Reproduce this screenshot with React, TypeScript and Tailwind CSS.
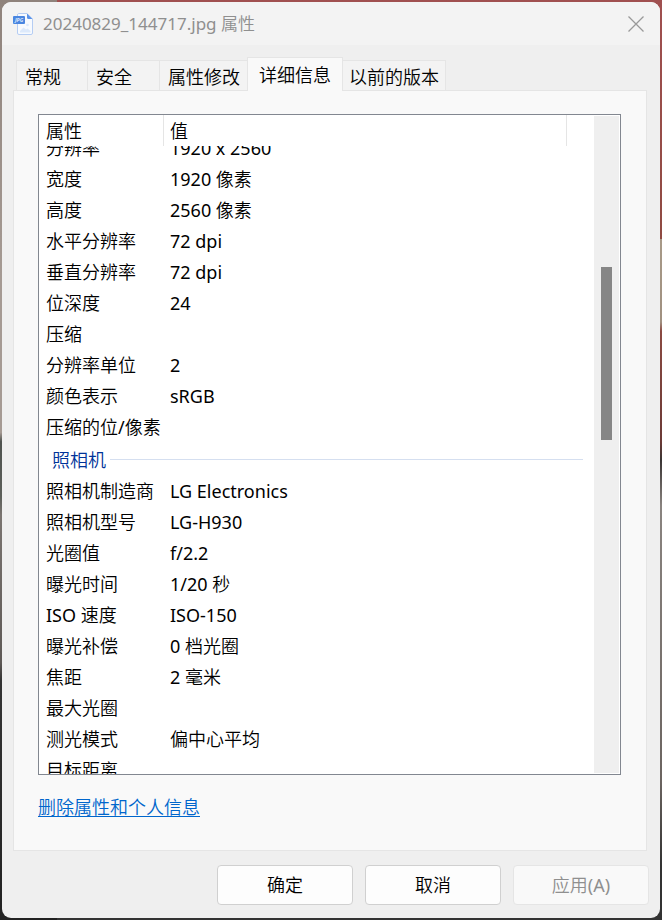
import React, { useLayoutEffect, useRef } from 'react';

type Row = { name: string; value?: string };

const TABS = [
  { id: 'general', label: '常规', pad: 'w-[71px] pl-2' },
  { id: 'security', label: '安全', pad: 'w-[72px] pl-2' },
  { id: 'edit', label: '属性修改', pad: 'pl-2 pr-[7px]' },
  { id: 'details', label: '详细信息', pad: 'px-[11px]' },
  { id: 'previous', label: '以前的版本', pad: 'px-1.5' },
];

const IMAGE_ROWS: Row[] = [
  { name: '分辨率', value: '1920 x 2560' },
  { name: '宽度', value: '1920 像素' },
  { name: '高度', value: '2560 像素' },
  { name: '水平分辨率', value: '72 dpi' },
  { name: '垂直分辨率', value: '72 dpi' },
  { name: '位深度', value: '24' },
  { name: '压缩' },
  { name: '分辨率单位', value: '2' },
  { name: '颜色表示', value: 'sRGB' },
  { name: '压缩的位/像素' },
];

const CAMERA_ROWS: Row[] = [
  { name: '照相机制造商', value: 'LG Electronics' },
  { name: '照相机型号', value: 'LG-H930' },
  { name: '光圈值', value: 'f/2.2' },
  { name: '曝光时间', value: '1/20 秒' },
  { name: 'ISO 速度', value: 'ISO-150' },
  { name: '曝光补偿', value: '0 档光圈' },
  { name: '焦距', value: '2 毫米' },
  { name: '最大光圈' },
  { name: '测光模式', value: '偏中心平均' },
  { name: '目标距离' },
];

function JpgIcon() {
  return (
    <svg className="w-5 h-[22px] shrink-0" viewBox="0 0 20 22" aria-hidden="true">
      <path d="M5.5 .5H14L19.5 6V20a1.5 1.5 0 0 1-1.5 1.5H6A1.5 1.5 0 0 1 4.5 20V2A1.5 1.5 0 0 1 5.5 .5Z" fill="#f7fafe" stroke="#b5cdf3" />
      <path d="M14 .5L19.5 6H15.5A1.5 1.5 0 0 1 14 4.5Z" fill="#5b93e8" />
      <path d="M7 19.5v-1.5l3.5-3.5 2.5 2 1.5-1 3 2.5v1.5Z" fill="#dce9fb" />
      <circle cx="14.5" cy="12" r="1.3" fill="#dce9fb" />
      <rect x="0" y="3" width="12" height="8" rx="1" fill="#4a86e0" />
      <text x="6" y="9" textAnchor="middle" fontSize="5" fontWeight="700" fontStyle="italic" fill="#dfeafc">JPG</text>
    </svg>
  );
}

function DetailRow({ row }: { row: Row }) {
  return (
    <tr className="h-[31px]">
      <td className="pl-[7px] whitespace-nowrap">{row.name}</td>
      <td className="pl-[7px] whitespace-nowrap">{row.value}</td>
      <td></td>
    </tr>
  );
}

export default function App() {
  const listRef = useRef<HTMLDivElement>(null);

  // Open the list slightly scrolled, the first row partly under the header
  useLayoutEffect(() => {
    if (listRef.current) listRef.current.scrollTop = 14;
  }, []);

  return (
    <div className="h-screen p-[2px] bg-no-repeat bg-[length:57px_100%,100%_100%] bg-[linear-gradient(to_bottom,#8f837c_0%,#a59a93_30%,#a59a93_47%,#4f534f_48%,#5c5f5a_54%,#7a7470_56%,#5e5956_72%,#333333_74%,#222222_100%),linear-gradient(to_bottom,#a05050_0%,#8f4a42_26%,#a89a88_26%,#a09080_35%,#8b4a42_36%,#6b3a36_48%,#3a3534_50%,#8a8480_55%,#6b6460_85%,#333333_94%)] font-['Noto_Sans','Noto_Sans_CJK_SC_DemiLight','Noto_Sans_CJK_SC',sans-serif] text-[18px] leading-6 text-black">
      <div className="h-full flex flex-col rounded-[9px] overflow-hidden bg-[#efefef]">

        {/* Title bar */}
        <header className="h-[43px] shrink-0 flex items-center bg-[#f3f3f3] pl-[11px] pr-4">
          <JpgIcon />
          <h1 className="ml-2.5 flex-1 text-[17px] text-[#8f8f8f]">20240829_144717.jpg 属性</h1>
          <button type="button" aria-label="关闭" className="w-4 h-4">
            <svg viewBox="0 0 16 16" className="w-4 h-4" stroke="#999999" strokeWidth="1.3">
              <path d="M.5 .5L15.5 15.5M15.5 .5L.5 15.5" />
            </svg>
          </button>
        </header>

        {/* Tabs */}
        <div role="tablist" className="mt-3 ml-3.5 shrink-0 flex items-end">
          {TABS.map((tab) => {
            const selected = tab.id === 'details';
            return (
              <button
                type="button"
                role="tab"
                aria-selected={selected}
                key={tab.id}
                className={`${tab.pad} border-[#e5e5e5] text-left whitespace-nowrap ${
                  selected
                    ? 'relative h-[34px] -mb-px border-x border-t bg-[#f9f9f9]'
                    : 'h-[30px] pt-0.5 border-t border-l last:border-l-0 last:border-r bg-[#f3f3f3]'
                }`}
              >
                {tab.label}
              </button>
            );
          })}
        </div>

        <main className="flex-1 min-h-0 flex flex-col ml-[11px] mr-[13px] pl-6 pr-[25px] pt-[23px] pb-[31px] bg-[#f9f9f9] border border-[#e5e5e5]">
          <div className="flex-1 min-h-0 flex bg-white border border-[#828790]">
            <div ref={listRef} className="flex-1 overflow-y-auto [scrollbar-width:none]">
              <table className="w-full table-fixed border-separate border-spacing-0 text-left">
                <colgroup>
                  <col className="w-[124px]" />
                  <col />
                  <col className="w-[27px]" />
                </colgroup>
                <thead className="sticky top-0 z-10 bg-white">
                  <tr className="h-[31px]">
                    <th className="pl-[7px] font-normal">属性</th>
                    <th className="pl-1.5 font-normal border-x border-[#e5e5e5]">值</th>
                    <th></th>
                  </tr>
                </thead>
                <tbody>
                  {IMAGE_ROWS.map((row) => <DetailRow key={row.name} row={row} />)}
                  <tr className="h-[33px]">
                    <th colSpan={3} className="pt-0.5 pl-[13px] pr-[11px] font-normal text-[#003399]">
                      <div className="flex items-center gap-1">
                        照相机
                        <span className="flex-1 h-px bg-[#d5dff0]"></span>
                      </div>
                    </th>
                  </tr>
                  {CAMERA_ROWS.map((row) => <DetailRow key={row.name} row={row} />)}
                </tbody>
              </table>
            </div>

            {/* Scroll track */}
            <div className="my-px mr-px w-[25px] shrink-0 bg-[#efefef] pt-[151px]">
              <div className="ml-[7px] w-[11px] h-[173px] bg-[#868686]"></div>
            </div>
          </div>
          <a href="#" className="mt-5 self-start text-[#0066cc] underline underline-offset-2">删除属性和个人信息</a>
        </main>

        {/* Dialog buttons */}
        <footer className="shrink-0 flex justify-end gap-3 pt-3.5 pb-[13px] pr-[11px]">
          <button type="button" className="w-[136px] h-10 rounded-[4px] border border-[#d0d0d0] bg-[#fdfdfd]">确定</button>
          <button type="button" className="w-[136px] h-10 rounded-[4px] border border-[#d0d0d0] bg-[#fdfdfd]">取消</button>
          <button type="button" disabled className="w-[136px] h-10 rounded-[4px] border border-[#e5e5e5] bg-[#f9f9f9] text-[#8f8f8f]">应用(A)</button>
        </footer>
      </div>
    </div>
  );
}
